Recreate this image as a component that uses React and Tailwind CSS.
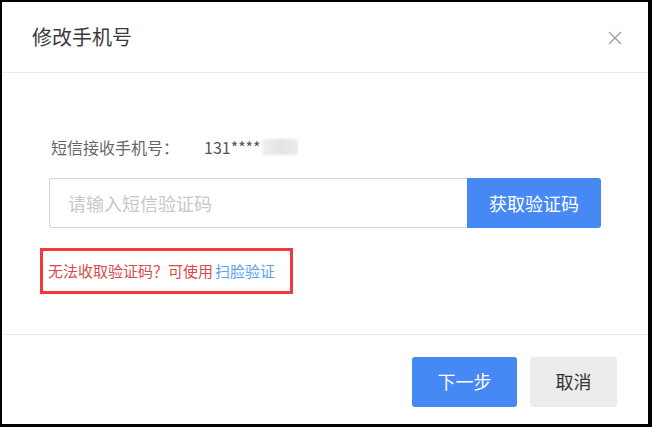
import React, { useState } from "react";

const font = { fontFamily: '"Noto Sans CJK SC", "Liberation Sans", sans-serif' };

const ChangePhoneDialog = () => {
  const [code, setCode] = useState("");

  return (
    <div
      className="w-[652px] h-[427px] bg-black pt-[2px] pl-[2px] pr-[4px] pb-[3px] overflow-hidden"
      style={font}
    >
      <div className="w-full h-full bg-white flex flex-col">
        {/* header */}
        <div className="h-[71px] shrink-0 flex items-center justify-between pl-[30px] pr-[26px] border-b border-[#ebebeb]">
          <span className="text-[20px] text-[#3a3a3a]">修改手机号</span>
          <svg width="14" height="14" viewBox="0 0 14 14" className="text-[#999] mt-[2px]">
            <path d="M1 1L13 13M13 1L1 13" stroke="currentColor" strokeWidth="1.2" />
          </svg>
        </div>

        {/* body */}
        <div className="h-[262px] shrink-0 pl-[47px] pr-[47px] pt-[62px] border-b border-[#ebebeb]">
          <div className="flex items-center text-[16px] text-[#666] h-[24px] pl-[2px]">
            <span>短信接收手机号：</span>
            <span className="ml-[25px] text-[#555]">131****</span>
            <span className="ml-[1px] w-[36px] h-[16px] rounded-[3px] bg-gradient-to-r from-[#f0f0f0] via-[#e4e4e4] to-[#ebebeb] blur-[1px]" />
          </div>

          <div className="mt-[19px] flex h-[50px]">
            <input
              value={code}
              onChange={(e) => setCode(e.target.value)}
              placeholder="请输入短信验证码"
              className="flex-1 h-full border border-[#d6d6d6] border-r-0 rounded-l-[3px] px-[18px] text-[18px] text-[#333] placeholder:text-[#c8c8c8] outline-none"
            />
            <button className="w-[134px] h-full bg-[#4689f5] text-white text-[18px] rounded-r-[3px]">
              获取验证码
            </button>
          </div>

          <div className="mt-[20px] -ml-[9px] w-[253px] h-[46px] border-[3px] border-[#f23a3a] flex items-center pl-[5px] text-[15px]">
            <span className="text-[#d94a4a]">无法收取验证码？可使用</span>
            <span className="ml-[2px] text-[#5aa2f2]">扫脸验证</span>
          </div>
        </div>

        {/* footer */}
        <div className="flex-1 flex items-center justify-end gap-[13px] pr-[31px] pt-[4px]">
          <button className="w-[105px] h-[50px] rounded-[3px] bg-[#4689f5] text-white text-[18px]">
            下一步
          </button>
          <button className="w-[87px] h-[50px] rounded-[3px] bg-[#ececec] text-[#333] text-[18px]">
            取消
          </button>
        </div>
      </div>
    </div>
  );
};

export default function App() {
  return <ChangePhoneDialog />;
}
